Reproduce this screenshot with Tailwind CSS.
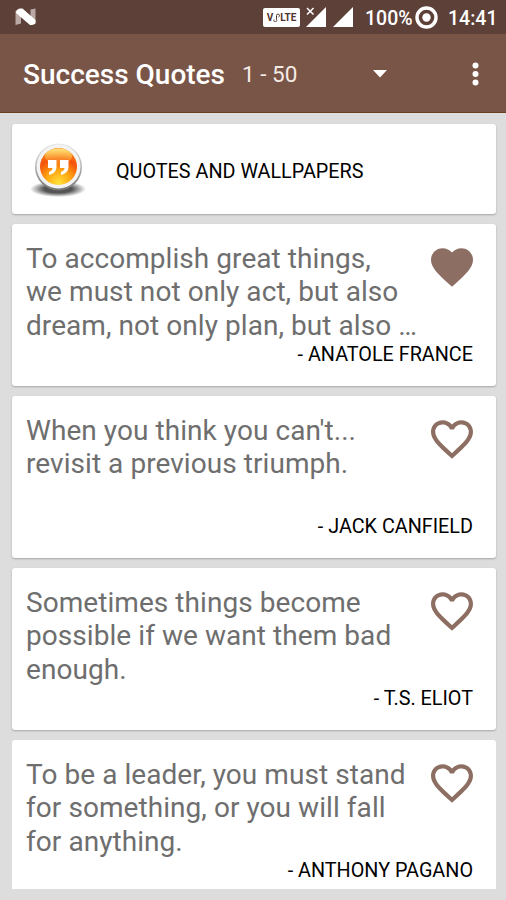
<!DOCTYPE html>
<html lang="en">
  <head>
    <meta charset="UTF-8" />
    <title>Success Quotes</title>
    <script src="https://cdn.jsdelivr.net/npm/@tailwindcss/browser@4"></script>
  </head>
  <body class="bg-[#dddddd] font-['Roboto',sans-serif] h-[900px] overflow-hidden">
    <!-- status bar -->
    <div class="h-[34px] bg-[#5d4037] text-white flex items-center pl-[15px] pr-[9px]">
      <svg class="w-[22px] h-[18px]" viewBox="0 0 22 18">
        <path d="M.5 3L6 1v14.500L.5 17zM15.500 1.500L20.500.5v15l-5 1z" fill="#b9a8a3" />
        <path d="M1 5Q1 1 5 .5h2.500L20.500 12v3Q19.500 17 15 17z" fill="#fff" />
      </svg>
      <div class="ml-auto flex items-center">
        <div class="w-[37px] h-[19px] bg-white rounded-xs text-[#4e342e] text-[10px] font-bold flex items-center justify-center">
          <span>V</span>
          <svg class="w-[7px] h-[10px]" viewBox="0 0 7 10" fill="none" stroke="#4e342e">
            <path d="M1 7.500a1.500 1.500 0 1 0 2.500 0V3.500a1.500 1.500 0 1 1 2 1.500" />
          </svg>
          <span>LTE</span>
        </div>
        <svg class="ml-[6px] w-[20px] h-[20px]" viewBox="0 0 20 20">
          <path d="M20 0v20H0z" fill="#fff" />
          <path d="M0 0h9.500v9H0z" fill="#5d4037" />
          <path d="M1 1l6.500 6.500M7.500 1L1 7.500" stroke="#fff" stroke-width="1.500" />
        </svg>
        <svg class="ml-[7px] w-[20px] h-[20px]" viewBox="0 0 20 20">
          <path d="M20 0v20H0z" fill="#fff" />
        </svg>
        <span class="ml-[12px] pt-[3px] w-[48px] text-[19.5px] font-medium whitespace-nowrap">100%</span>
        <svg class="ml-[2px] w-[23px] h-[23px]" viewBox="0 0 23 23">
          <circle cx="11.500" cy="11.500" r="9.500" fill="none" stroke="#fff" stroke-width="3.400" />
          <circle cx="11.500" cy="11.500" r="4.200" fill="#fff" />
        </svg>
        <span class="ml-[10px] pt-[3px] w-[49px] text-[19.5px] font-medium whitespace-nowrap">14:41</span>
      </div>
    </div>

    <!-- toolbar -->
    <div class="h-[79px] bg-[#795548] border-b border-[#6b3f20] text-white flex items-center pl-[23px] pr-[27px]">
      <h1 class="w-[219px] text-[28px] font-medium whitespace-nowrap pt-[4px]">Success Quotes</h1>
      <span class="w-[131px] pt-[3px] text-[22.5px] text-[#f5ebe6] whitespace-nowrap">1 - 50</span>
      <svg class="mt-[2px] w-[14px] h-[8px]" viewBox="0 0 14 8"><path d="M0 0h14L7 7.500z" fill="#fff" /></svg>
      <svg class="ml-auto mt-[1px] w-[7px] h-[24px]" viewBox="0 0 7 24" fill="#fff">
        <circle cx="3.500" cy="3.500" r="3" />
        <circle cx="3.500" cy="12" r="3" />
        <circle cx="3.500" cy="20.500" r="3" />
      </svg>
    </div>

    <main class="pt-[11px] pl-[12px] pr-[10px] flex flex-col gap-[10px]">
      <div class="h-[90px] bg-white rounded-[3px] shadow-[0_1px_2px_#00000040] flex items-center pl-[18px]">
        <svg class="w-[56px] h-[56px]" viewBox="0 0 56 56">
          <defs>
            <radialGradient id="shade">
              <stop offset="0.500" stop-color="#555" />
              <stop offset="1" stop-color="#555" stop-opacity="0" />
            </radialGradient>
            <radialGradient id="ball" cx="0.500" cy="0.950" r="0.900">
              <stop offset="0" stop-color="#ffe23a" />
              <stop offset="0.400" stop-color="#ffa410" />
              <stop offset="0.750" stop-color="#f4510b" />
              <stop offset="1" stop-color="#f98a1c" />
            </radialGradient>
            <linearGradient id="rim" x2="0" y2="1">
              <stop offset="0" stop-color="#e8e8e8" />
              <stop offset="1" stop-color="#777" />
            </linearGradient>
            <linearGradient id="gloss" x2="0" y2="1">
              <stop offset="0" stop-color="#ffe680" />
              <stop offset="1" stop-color="#ffb030" stop-opacity="0.200" />
            </linearGradient>
          </defs>
          <ellipse cx="28" cy="48" rx="28" ry="8" fill="url(#shade)" />
          <circle cx="28.500" cy="26" r="23.500" fill="url(#rim)" />
          <circle cx="28.500" cy="25.500" r="22" fill="#f3f3f3" />
          <circle cx="28.500" cy="25.500" r="18.500" fill="url(#ball)" />
          <ellipse cx="28.500" cy="15.500" rx="13.500" ry="8" fill="url(#gloss)" />
          <path d="M18 19h8.500v7q0 6-7.500 8v-3q3.500-1.500 3.500-4H18zM30 19h8.500v7q0 6-7.500 8v-3q3.500-1.500 3.500-4H30z" fill="#fff" />
        </svg>
        <span class="ml-[30px] pt-[5px] text-[19.8px] text-black whitespace-nowrap">QUOTES AND WALLPAPERS</span>
      </div>

      <div class="h-[162px] bg-white rounded-[3px] shadow-[0_1px_2px_#00000040] pl-[14px] pr-[23px] pt-[18px]">
        <div class="h-[103px] flex justify-between">
          <p class="text-[28px] leading-[33.3px] tracking-[0.06px] text-[#6e6e6e] whitespace-nowrap">To accomplish great things,<br />we must not only act, but also<br />dream, not only plan, but also …</p>
          <svg class="-ml-[20px] mt-[6px] w-[42px] h-[39px] shrink-0" viewBox="2 3 20 18.350" fill="#8d6e63">
            <path d="M12 21.350l-1.450-1.320C5.400 15.360 2 12.280 2 8.500 2 5.420 4.420 3 7.500 3c1.740 0 3.410.81 4.500 2.090C13.090 3.810 14.760 3 16.500 3 19.580 3 22 5.420 22 8.500c0 3.780-3.400 6.860-8.550 11.540L12 21.350z" />
          </svg>
        </div>
        <p class="text-[19.8px] leading-[20px] text-black text-right">- ANATOLE FRANCE</p>
      </div>

      <div class="h-[162px] bg-white rounded-[3px] shadow-[0_1px_2px_#00000040] pl-[14px] pr-[23px] pt-[18px]">
        <div class="h-[103px] flex justify-between">
          <p class="text-[28px] leading-[33.3px] tracking-[0.06px] text-[#6e6e6e] whitespace-nowrap">When you think you can't...<br />revisit a previous triumph.</p>
          <svg class="mt-[6px] w-[42px] h-[39px] shrink-0" viewBox="2 3 20 18.350" fill="#8d6e63">
            <path d="M16.500 3c-1.740 0-3.410.81-4.500 2.090C10.910 3.810 9.240 3 7.500 3 4.420 3 2 5.420 2 8.500c0 3.780 3.400 6.860 8.550 11.540L12 21.350l1.450-1.320C18.600 15.360 22 12.280 22 8.500 22 5.420 19.580 3 16.500 3zm-4.400 15.550l-.1.100-.1-.1C7.140 14.240 4 11.390 4 8.500 4 6.500 5.500 5 7.500 5c1.540 0 3.040.99 3.570 2.360h1.870C13.460 5.990 14.960 5 16.500 5c2 0 3.500 1.500 3.500 3.500 0 2.890-3.140 5.740-7.900 10.050z" />
          </svg>
        </div>
        <p class="text-[19.8px] leading-[20px] text-black text-right">- JACK CANFIELD</p>
      </div>

      <div class="h-[162px] bg-white rounded-[3px] shadow-[0_1px_2px_#00000040] pl-[14px] pr-[23px] pt-[18px]">
        <div class="h-[103px] flex justify-between">
          <p class="text-[28px] leading-[33.3px] tracking-[0.06px] text-[#6e6e6e] whitespace-nowrap">Sometimes things become<br />possible if we want them bad<br />enough.</p>
          <svg class="mt-[6px] w-[42px] h-[39px] shrink-0" viewBox="2 3 20 18.350" fill="#8d6e63">
            <path d="M16.500 3c-1.740 0-3.410.81-4.500 2.090C10.910 3.810 9.240 3 7.500 3 4.420 3 2 5.420 2 8.500c0 3.780 3.400 6.860 8.550 11.540L12 21.350l1.450-1.320C18.600 15.360 22 12.280 22 8.500 22 5.420 19.580 3 16.500 3zm-4.400 15.550l-.1.100-.1-.1C7.140 14.240 4 11.390 4 8.500 4 6.500 5.500 5 7.500 5c1.540 0 3.040.99 3.570 2.360h1.870C13.460 5.990 14.960 5 16.500 5c2 0 3.500 1.500 3.500 3.500 0 2.890-3.140 5.740-7.900 10.050z" />
          </svg>
        </div>
        <p class="text-[19.8px] leading-[20px] text-black text-right">- T.S. ELIOT</p>
      </div>

      <div class="h-[149px] bg-white rounded-t-[3px] pl-[14px] pr-[23px] pt-[18px]">
        <div class="h-[103px] flex justify-between">
          <p class="text-[28px] leading-[33.3px] tracking-[0.06px] text-[#6e6e6e] whitespace-nowrap">To be a leader, you must stand<br />for something, or you will fall<br />for anything.</p>
          <svg class="mt-[6px] w-[42px] h-[39px] shrink-0" viewBox="2 3 20 18.350" fill="#8d6e63">
            <path d="M16.500 3c-1.740 0-3.410.81-4.500 2.090C10.910 3.810 9.240 3 7.500 3 4.420 3 2 5.420 2 8.500c0 3.780 3.400 6.860 8.550 11.540L12 21.350l1.450-1.320C18.600 15.360 22 12.280 22 8.500 22 5.420 19.580 3 16.500 3zm-4.400 15.550l-.1.100-.1-.1C7.140 14.240 4 11.390 4 8.500 4 6.500 5.500 5 7.500 5c1.540 0 3.040.99 3.570 2.360h1.870C13.460 5.990 14.960 5 16.500 5c2 0 3.500 1.500 3.500 3.500 0 2.890-3.140 5.740-7.900 10.050z" />
          </svg>
        </div>
        <p class="text-[19.8px] leading-[20px] text-black text-right">- ANTHONY PAGANO</p>
      </div>
    </main>
  </body>
</html>
